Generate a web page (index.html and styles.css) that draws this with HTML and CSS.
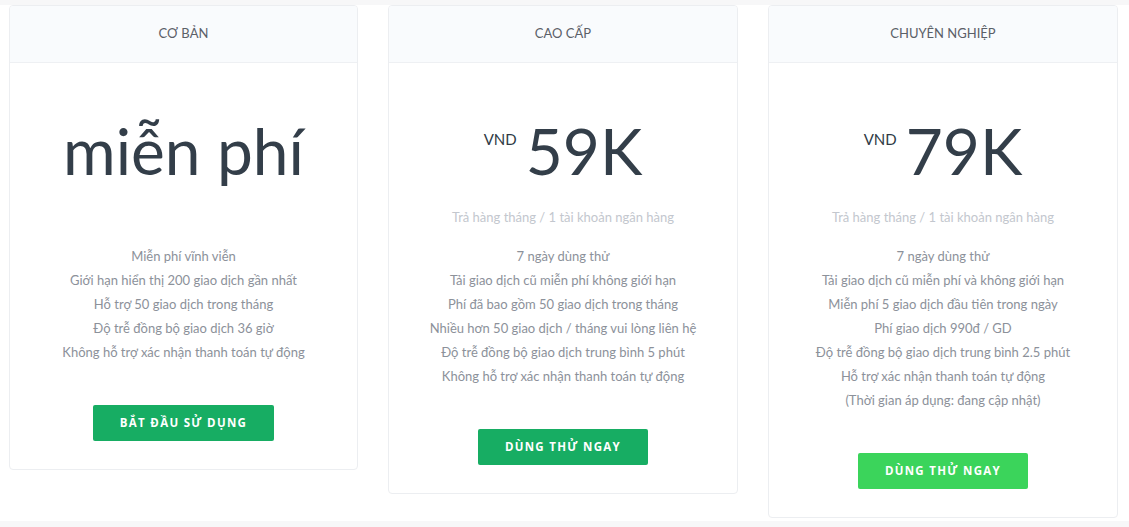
FILE: index.html
```html
<!DOCTYPE html>
<html lang="vi">
<head>
<meta charset="utf-8">
<title>Bảng giá</title>
<link rel="stylesheet" href="styles.css">
</head>
<body>
<section class="pricing">
  <div class="card">
    <div class="card-header">CƠ BẢN</div>
    <div class="card-body">
      <div class="price free">miễn phí</div>
      <div class="subtitle">&nbsp;</div>
      <ul class="features">
        <li>Miễn phí vĩnh viễn</li>
        <li>Giới hạn hiển thị 200 giao dịch gần nhất</li>
        <li>Hỗ trợ 50 giao dịch trong tháng</li>
        <li>Độ trễ đồng bộ giao dịch 36 giờ</li>
        <li>Không hỗ trợ xác nhận thanh toán tự động</li>
      </ul>
      <a class="btn btn-dark" href="#">BẮT ĐẦU SỬ DỤNG</a>
    </div>
  </div>
  <div class="card">
    <div class="card-header">CAO CẤP</div>
    <div class="card-body">
      <div class="price"><span class="currency">VND</span>59K</div>
      <div class="subtitle">Trả hàng tháng / 1 tài khoản ngân hàng</div>
      <ul class="features">
        <li>7 ngày dùng thử</li>
        <li>Tải giao dịch cũ miễn phí không giới hạn</li>
        <li>Phí đã bao gồm 50 giao dịch trong tháng</li>
        <li>Nhiều hơn 50 giao dịch / tháng vui lòng liên hệ</li>
        <li>Độ trễ đồng bộ giao dịch trung bình 5 phút</li>
        <li>Không hỗ trợ xác nhận thanh toán tự động</li>
      </ul>
      <a class="btn btn-dark" href="#">DÙNG THỬ NGAY</a>
    </div>
  </div>
  <div class="card">
    <div class="card-header">CHUYÊN NGHIỆP</div>
    <div class="card-body">
      <div class="price"><span class="currency">VND</span>79K</div>
      <div class="subtitle">Trả hàng tháng / 1 tài khoản ngân hàng</div>
      <ul class="features">
        <li>7 ngày dùng thử</li>
        <li>Tải giao dịch cũ miễn phí và không giới hạn</li>
        <li>Miễn phí 5 giao dịch đầu tiên trong ngày</li>
        <li>Phí giao dịch 990đ / GD</li>
        <li>Độ trễ đồng bộ giao dịch trung bình 2.5 phút</li>
        <li>Hỗ trợ xác nhận thanh toán tự động</li>
        <li>(Thời gian áp dụng: đang cập nhật)</li>
      </ul>
      <a class="btn btn-light" href="#">DÙNG THỬ NGAY</a>
    </div>
  </div>
</section>
</body>
</html>
```

FILE: styles.css
```css
html, body {
  margin: 0;
  padding: 0;
}
body {
  background: #f7f7f8;
  font-family: Lato, "Noto Sans", sans-serif;
  padding-top: 5px;
}
.pricing {
  background: #ffffff;
  display: grid;
  grid-template-columns: 349px 350px 350px;
  column-gap: 30px;
  align-items: start;
  padding: 0 0 3px 9px;
}
.card {
  border: 1px solid #eceef1;
  border-radius: 4px;
  background: #fff;
  overflow: hidden;
}
.card-header {
  height: 53px;
  padding-bottom: 3px;
  background: #f9fbfd;
  border-bottom: 1px solid #eef0f3;
  display: flex;
  align-items: center;
  justify-content: center;
  font-size: 13px;
  color: #5b6068;
}
.card-body {
  padding: 48px 10px 28px;
  text-align: center;
}
.price {
  font-size: 64px;
  line-height: 80px;
  height: 80px;
  color: #333e49;
}
.currency {
  font-size: 15px;
  line-height: 15px;
  vertical-align: 30px;
  margin-right: 9px;
  color: #2f3a45;
}
.subtitle {
  margin-top: 16px;
  font-size: 13px;
  line-height: 20px;
  color: #c3c7ce;
}
.features {
  list-style: none;
  margin: 17px 0 0;
  padding: 0;
  font-size: 13px;
  line-height: 24px;
  color: #8c919a;
}
.btn {
  display: inline-block;
  margin-top: 41px;
  height: 36px;
  line-height: 36px;
  padding: 0 27px;
  border-radius: 2px;
  color: #fff;
  text-decoration: none;
  font-family: "Open Sans", sans-serif;
  font-weight: 700;
  font-size: 11.5px;
  letter-spacing: 1.3px;
}
.btn-dark {
  background: #17ad63;
}
.btn-light {
  background: #3bd45b;
}
```
